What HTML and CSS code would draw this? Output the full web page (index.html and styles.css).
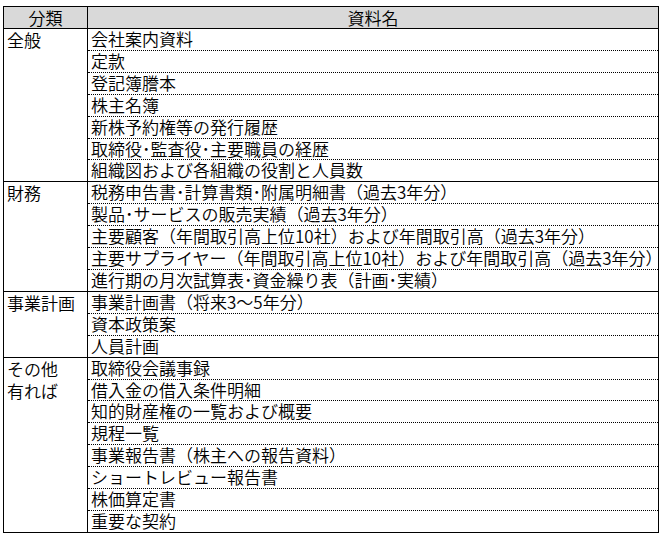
FILE: index.html
```html
<!DOCTYPE html>
<html lang="ja">
<head>
<meta charset="utf-8">
<link rel="stylesheet" href="styles.css">
</head>
<body>
<table class="sheet">
  <colgroup><col class="c-cat"><col class="c-doc"></colgroup>
  <thead>
    <tr><th>分類</th><th>資料名</th></tr>
  </thead>
  <tbody>
    <tr class="first"><td class="cat" rowspan="7">全般</td><td>会社案内資料</td></tr>
    <tr><td>定款</td></tr>
    <tr><td>登記簿謄本</td></tr>
    <tr><td>株主名簿</td></tr>
    <tr><td>新株予約権等の発行履歴</td></tr>
    <tr><td>取締役･監査役･主要職員の経歴</td></tr>
    <tr class="last"><td>組織図および各組織の役割と人員数</td></tr>

    <tr class="first"><td class="cat" rowspan="5">財務</td><td>税務申告書･計算書類･附属明細書（過去3年分）</td></tr>
    <tr><td>製品･サービスの販売実績（過去3年分）</td></tr>
    <tr><td>主要顧客（年間取引高上位10社）および年間取引高（過去3年分）</td></tr>
    <tr><td>主要サプライヤー（年間取引高上位10社）および年間取引高（過去3年分）</td></tr>
    <tr class="last"><td>進行期の月次試算表･資金繰り表（計画･実績）</td></tr>

    <tr class="first"><td class="cat" rowspan="3">事業計画</td><td>事業計画書（将来3～5年分）</td></tr>
    <tr><td>資本政策案</td></tr>
    <tr class="last"><td>人員計画</td></tr>

    <tr class="first"><td class="cat" rowspan="8">その他<br>有れば</td><td>取締役会議事録</td></tr>
    <tr><td>借入金の借入条件明細</td></tr>
    <tr><td>知的財産権の一覧および概要</td></tr>
    <tr><td>規程一覧</td></tr>
    <tr><td>事業報告書（株主への報告資料）</td></tr>
    <tr><td>ショートレビュー報告書</td></tr>
    <tr><td>株価算定書</td></tr>
    <tr class="last"><td>重要な契約</td></tr>
  </tbody>
</table>
</body>
</html>
```

FILE: styles.css
```css
html, body {
  margin: 0;
  padding: 0;
  background: #ffffff;
}

body {
  padding: 6px 0 0 3px;
  font-family: "Noto Sans CJK JP", "Noto Sans", sans-serif;
  font-size: 17px;
  font-weight: 350;
  color: #000;
}

.sheet {
  border-collapse: collapse;
  table-layout: fixed;
  width: 655px;
  border: 1px solid #000;
}

.c-cat { width: 84px; }
.c-doc { width: 571px; }

.sheet th {
  background: #d9d9d9;
  font-weight: 350;
  height: 21px;
  padding: 0;
  line-height: 21px;
  text-align: center;
  border: 1px solid #000;
}

.sheet td {
  height: 20.9px;
  padding: 0 0 0 3px;
  line-height: 20.9px;
  vertical-align: bottom;
  white-space: nowrap;
  border-left: 1px solid #000;
  border-right: 1px solid #000;
  border-bottom: 1px dotted #000;
}

.sheet tr.last td {
  border-bottom: 1px solid #000;
}

.sheet td.cat {
  vertical-align: top;
  line-height: 22px;
  border-bottom: 1px solid #000;
}
```
